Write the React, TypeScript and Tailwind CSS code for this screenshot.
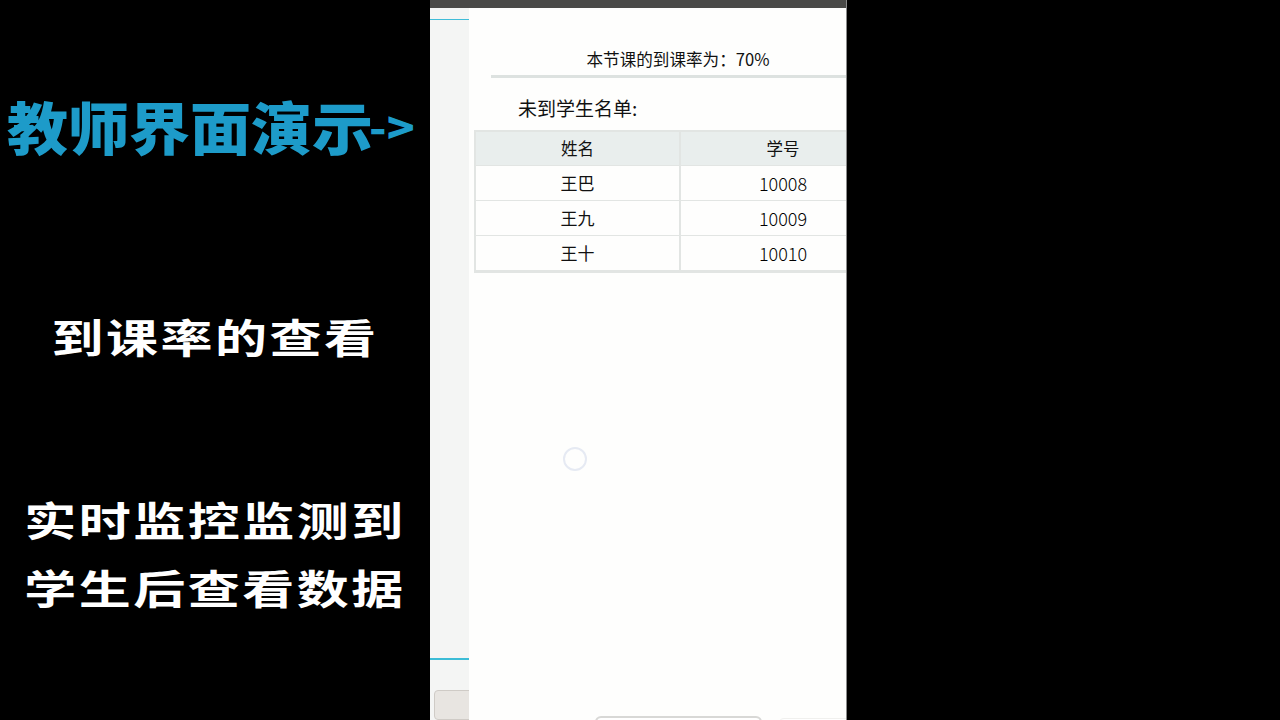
const cjk = "font-['Noto_Sans_CJK_SC','Noto_Sans',sans-serif]";

const absentStudents = [
  { name: '王巴', id: '10008' },
  { name: '王九', id: '10009' },
  { name: '王十', id: '10010' },
];

function Caption({ children, className = '' }: { children: string; className?: string }) {
  return (
    <div className={`h-[68px] flex items-center justify-center text-white text-[52px] leading-none font-bold tracking-[2.5px] whitespace-nowrap scale-y-[0.76] ${className}`}>
      {children}
    </div>
  );
}

export default function App() {
  return (
    <div className={`w-[1280px] h-[720px] bg-black flex overflow-hidden ${cjk}`}>
      {/* Left captions */}
      <div className="w-[430px] shrink-0 flex flex-col">
        <div className="mt-[91px] ml-[7px] h-[68px] flex items-center text-[#1d9bc9] text-[61px] leading-none font-black whitespace-nowrap scale-y-[0.93] origin-left">
          教师界面演示<span className="text-[46px] -ml-[4px]">-&gt;</span>
        </div>
        <div className="mt-[143px]">
          <Caption>到课率的查看</Caption>
        </div>
        <div className="mt-[115px]">
          <Caption>实时监控监测到</Caption>
          <Caption>学生后查看数据</Caption>
        </div>
      </div>

      {/* Phone recording */}
      <div className="w-[417px] shrink-0 flex flex-col border-r border-[#8a8a8a]">
        <div className="h-2 bg-[#4a4a48] shrink-0" />
        <div className="flex flex-1 min-h-0">
          {/* Page behind the dialog */}
          <div className="w-[39px] shrink-0 bg-[#f4f5f4] flex flex-col overflow-hidden">
            <div className="mt-[11px] h-px bg-[#3fbcd8]" />
            <div className="mt-[639px] h-[3px] bg-[#3cbcd6]" />
            <div className="mt-[30px] ml-[4px] w-[60px] h-[60px] bg-[#e8e5e1] border border-[#cfcbc6] rounded-[4px]" />
          </div>

          {/* Dialog */}
          <div className="relative flex-1 bg-[#fefefd] overflow-hidden">
            <div className="w-[418px] flex flex-col text-[#111111]">
              <div className="mt-[39px] h-6 flex items-center justify-center text-[16.6px] leading-6">
                本节课的到课率为：70%
              </div>
              <div className="mt-[4px] ml-[22px] mr-[-2px] h-[3px] bg-[#dde2e0]" />
              <div className="mt-[16px] ml-[49px] text-[19px] leading-[27px]">未到学生名单:</div>
              <div className="mt-[9px] ml-[5px] w-[411px] border-2 border-[#e2e5e3] border-r-0 border-b-[3px]">
                <div className="flex h-[33px] bg-[#e9eeed] text-[16.5px]">
                  <div className="w-[203px] flex items-center justify-center border-r-2 border-[#e2e5e3] box-content">姓名</div>
                  <div className="flex-1 flex items-center justify-center">学号</div>
                </div>
                {absentStudents.map((s) => (
                  <div key={s.id} className="flex h-[35px] text-[17px] border-t border-[#e2e5e3]">
                    <div className="w-[203px] flex items-center justify-center border-r-2 border-[#e2e5e3] box-content">{s.name}</div>
                    <div className="flex-1 flex items-center justify-center text-[18px] font-light text-black">{s.id}</div>
                  </div>
                ))}
              </div>
            </div>

            {/* Touch indicator */}
            <div className="absolute left-[94px] top-[439px] w-6 h-6 rounded-full border-2 border-[#e6eaf3]" />

            {/* Bottom buttons, mostly off screen */}
            <div className="absolute left-[126px] top-[708px] w-[167px] h-10 rounded-[6px] border-2 border-[#d8d8d6] bg-white" />
            <div className="absolute left-[309px] top-[710px] w-[90px] h-10 rounded-[6px] border border-[#f0f0ee] bg-white" />
          </div>
        </div>
      </div>
    </div>
  );
}
